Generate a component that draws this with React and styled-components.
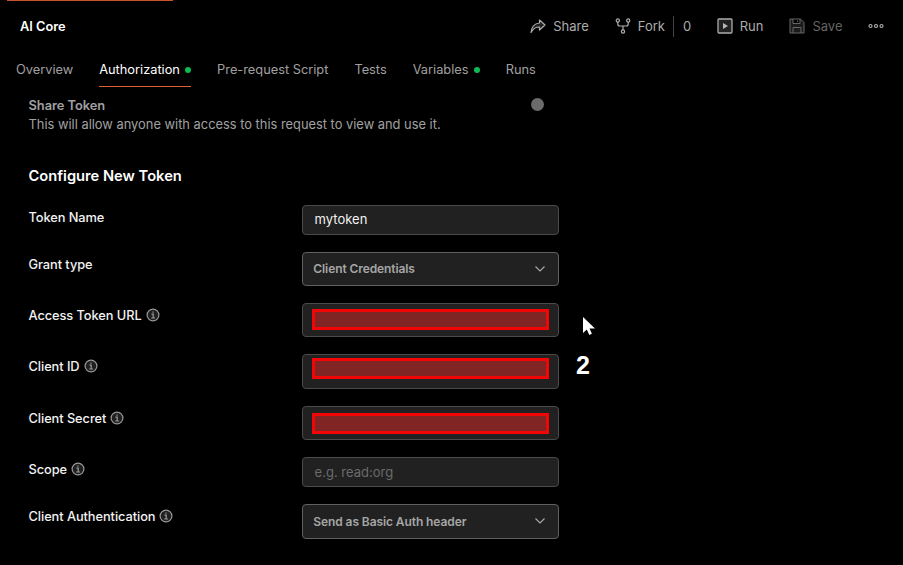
import React from "react";
import styled, { createGlobalStyle } from "styled-components";

const Global = createGlobalStyle`
  * { box-sizing: border-box; }
  body {
    margin: 0;
    background: #000;
    color: #f2f2f2;
    font-family: Inter, "Liberation Sans", sans-serif;
    font-size: 13px;
    line-height: 20px;
  }
  svg { display: block; flex: none; }
`;

const Page = styled.main`
  position: relative;
  width: 903px;
  height: 565px;
  overflow: hidden;
  background: #000;
`;

const OpenTabLine = styled.div`
  width: 166px;
  height: 1px;
  margin-left: 7px;
  background: #c9532c;
`;

const Header = styled.header`
  display: flex;
  align-items: center;
  justify-content: space-between;
  height: 50px;
  padding: 0 19px 0 20px;
`;

const Title = styled.h1`
  margin: 0;
  padding-top: 2px;
  font-size: 12.8px;
  font-weight: 600;
  color: #fff;
`;

const Actions = styled.div`
  display: flex;
  align-items: center;
`;

const Action = styled.button`
  display: flex;
  align-items: center;
  gap: 7px;
  margin: 0 0 0 ${(p) => p.$before ?? 0}px;
  padding: 0;
  border: 0;
  background: none;
  font: inherit;
  color: ${(p) => (p.$muted ? "#636363" : "#adadad")};
`;

const ForkCount = styled.span`
  height: 21px;
  margin-left: 8px;
  padding-left: 9px;
  border-left: 1px solid #444;
  line-height: 21px;
  color: #adadad;
`;

const Tabs = styled.nav`
  display: flex;
  gap: 26px;
  height: 36px;
  padding-left: 16px;
  font-size: 12.8px;
`;

const Tab = styled.a`
  display: flex;
  align-items: center;
  gap: 5.2px;
  height: 36px;
  padding-top: 3px;
  border-bottom: 1px solid ${(p) => (p.$active ? "#e0602f" : "transparent")};
  color: ${(p) => (p.$active ? "#fff" : "#a0a0a0")};
`;

const Dot = styled.i`
  width: 6px;
  height: 6px;
  border-radius: 50%;
  background: #0cbb52;
`;

const ShareRow = styled.section`
  display: flex;
  justify-content: space-between;
  width: 544.3px;
  margin-top: 9px;
  padding-left: 28.5px;
  color: #a0a0a0;
  font-size: 12.87px;
  line-height: 19px;
`;

const ShareTitle = styled.div`
  font-weight: 600;
  letter-spacing: -0.05px;
`;

const Knob = styled.span`
  width: 13px;
  height: 13px;
  margin-top: 2.3px;
  border-radius: 50%;
  background: #6b6b6b;
`;

const SectionTitle = styled.h2`
  margin: 32px 0 0 28.5px;
  font-size: 14.7px;
  font-weight: 600;
  line-height: 20px;
  color: #fff;
`;

const Form = styled.div`
  display: flex;
  flex-direction: column;
  gap: 17px;
  width: 559px;
  margin-top: 18.65px;
  padding-left: 28.5px;
`;

const Field = styled.div`
  display: grid;
  grid-template-columns: 273.8px 1fr;
`;

const Label = styled.label`
  display: flex;
  align-items: center;
  gap: 4px;
  height: 24px;
  font-size: 12.8px;
  font-weight: 450;
  letter-spacing: -0.06px;
  color: #f2f2f2;
`;

const LabelText = styled.span`
  padding-top: 2px;
`;

const Control = styled.div`
  display: flex;
  align-items: center;
  justify-content: space-between;
  height: ${(p) => (p.$tall ? 34.35 : 30.1)}px;
  padding: 0 12px 0 ${(p) => (p.$select ? 10 : 11.3)}px;
  border: 1px solid ${(p) => (p.$select ? "#606060" : "#4a4a4a")};
  border-radius: 4px;
  background: #212121;
  font-size: ${(p) => (p.$select ? 12 : 13)}px;
  font-weight: ${(p) => (p.$select ? 600 : 400)};
  letter-spacing: ${(p) => (p.$select ? "-0.09px" : "normal")};
  color: ${(p) => (p.$select ? "#a6a6a6" : p.$placeholder ? "#6b6b6b" : "#f2f2f2")};
`;

const ControlText = styled.span`
  padding-top: ${(p) => (p.$select ? 1 : 0)}px;
  padding-bottom: ${(p) => (p.$raised ? 1 : 0)}px;
`;

const RedactedControl = styled(Control)`
  align-items: flex-start;
  padding: ${(p) => p.$drop}px 9px 0 9px;
`;

const Redaction = styled.div`
  width: 100%;
  height: 21px;
  border: 3.5px solid #f20505;
  background: #802424;
`;

const Pointer = styled.svg`
  position: absolute;
  left: 582px;
  top: 316px;
`;

const StepNumber = styled.div`
  position: absolute;
  left: 576px;
  top: 351px;
  font: 700 25px/29px "Liberation Sans", Arial, sans-serif;
  color: #fff;
`;

const ShareIcon = () => (
  <svg width="16" height="16" viewBox="0 0 16 16" fill="#222" stroke="#adadad" strokeWidth="1.200" strokeLinejoin="round">
    <path d="M9.500 2 15 7l-5.500 5V9C5.500 9 3 10.500 1 14.500 1.500 8.500 4.500 5.500 9.500 5z" />
  </svg>
);

const ForkIcon = () => (
  <svg width="16" height="16" viewBox="0 0 16 16" fill="none" stroke="#adadad" strokeWidth="1.200">
    <circle cx="2.800" cy="2.500" r="1.600" />
    <circle cx="13.200" cy="2.500" r="1.600" />
    <circle cx="8" cy="13.500" r="1.600" />
    <path d="M2.800 4v2q0 2 2 2h6.400q2 0 2-2V4M8 8v4" />
  </svg>
);

const RunIcon = () => (
  <svg width="16" height="16" viewBox="0 0 16 16">
    <rect x="1" y="1" width="14" height="14" rx="1" fill="#222" stroke="#adadad" strokeWidth="1.300" />
    <path d="M6 5v6l5-3z" fill="#b8b8b8" />
  </svg>
);

const SaveIcon = () => (
  <svg width="16" height="16" viewBox="0 0 16 16" fill="#1b1b1b" stroke="#666">
    <path d="M1 1h10.500L15 4.500V15H1zM4 1v4.500h7V1M4 15V9.500h8V15M8.500 2.500v1.500" />
  </svg>
);

const MoreIcon = () => (
  <svg width="16" height="16" viewBox="0 0 16 16" fill="none" stroke="#adadad" strokeWidth="1.200">
    <circle cx="2.500" cy="8" r="1.500" />
    <circle cx="8" cy="8" r="1.500" />
    <circle cx="13.500" cy="8" r="1.500" />
  </svg>
);

const InfoIcon = () => (
  <svg width="14" height="14" viewBox="0 0 14 14" fill="none" stroke="#9a9a9a">
    <circle cx="7" cy="7" r="5.900" fill="#202020" strokeWidth="1.200" />
    <path d="M5.500 6.200H7.200V10M5.200 10h3.800M6.400 4.100h1.200" strokeWidth="1.200" />
  </svg>
);

const Chevron = () => (
  <svg width="12" height="8" viewBox="0 0 12 8" fill="none" stroke="#a6a6a6" strokeWidth="1.200">
    <path d="M1.500 1.500 6 6l4.500-4.500" />
  </svg>
);

const tabs = [
  { name: "Overview" },
  { name: "Authorization", dot: true, active: true },
  { name: "Pre-request Script" },
  { name: "Tests" },
  { name: "Variables", dot: true },
  { name: "Runs" },
];

const fields = [
  { label: "Token Name", kind: "text", value: "mytoken" },
  { label: "Grant type", kind: "select", value: "Client Credentials" },
  { label: "Access Token URL", kind: "redacted", info: true, drop: 5 },
  { label: "Client ID", kind: "redacted", info: true, drop: 2.7 },
  { label: "Client Secret", kind: "redacted", info: true, drop: 6 },
  { label: "Scope", kind: "placeholder", info: true, value: "e.g. read:org" },
  { label: "Client Authentication", kind: "select", info: true, value: "Send as Basic Auth header" },
];

function FieldControl({ field }) {
  if (field.kind === "redacted") {
    return (
      <RedactedControl $tall $drop={field.drop}>
        <Redaction />
      </RedactedControl>
    );
  }
  const select = field.kind === "select";
  return (
    <Control $tall={select} $select={select} $placeholder={field.kind === "placeholder"}>
      <ControlText $select={select} $raised={field.kind === "text"}>{field.value}</ControlText>
      {select && <Chevron />}
    </Control>
  );
}

export default function App() {
  return (
    <Page>
      <Global />
      <OpenTabLine />
      <Header>
        <Title>AI Core</Title>
        <Actions>
          <Action><ShareIcon />Share</Action>
          <Action $before={26}><ForkIcon />Fork</Action>
          <ForkCount>0</ForkCount>
          <Action $before={25.5}><RunIcon />Run</Action>
          <Action $before={26} $muted><SaveIcon />Save</Action>
          <Action $before={25.5} aria-label="More actions"><MoreIcon /></Action>
        </Actions>
      </Header>
      <Tabs>
        {tabs.map((t) => (
          <Tab key={t.name} $active={t.active}>
            {t.name}
            {t.dot && <Dot />}
          </Tab>
        ))}
      </Tabs>
      <ShareRow>
        <div>
          <ShareTitle>Share Token</ShareTitle>
          <div>This will allow anyone with access to this request to view and use it.</div>
        </div>
        <Knob />
      </ShareRow>
      <SectionTitle>Configure New Token</SectionTitle>
      <Form>
        {fields.map((f) => (
          <Field key={f.label}>
            <Label>
              <LabelText>{f.label}</LabelText>
              {f.info && <InfoIcon />}
            </Label>
            <FieldControl field={f} />
          </Field>
        ))}
      </Form>
      <Pointer width="14" height="20" viewBox="0 0 14 20">
        <path d="M1 1v16l3.800-3.500L7.300 19l2.600-1.200-2.400-5.200H13z" fill="#fff" />
      </Pointer>
      <StepNumber>2</StepNumber>
    </Page>
  );
}
